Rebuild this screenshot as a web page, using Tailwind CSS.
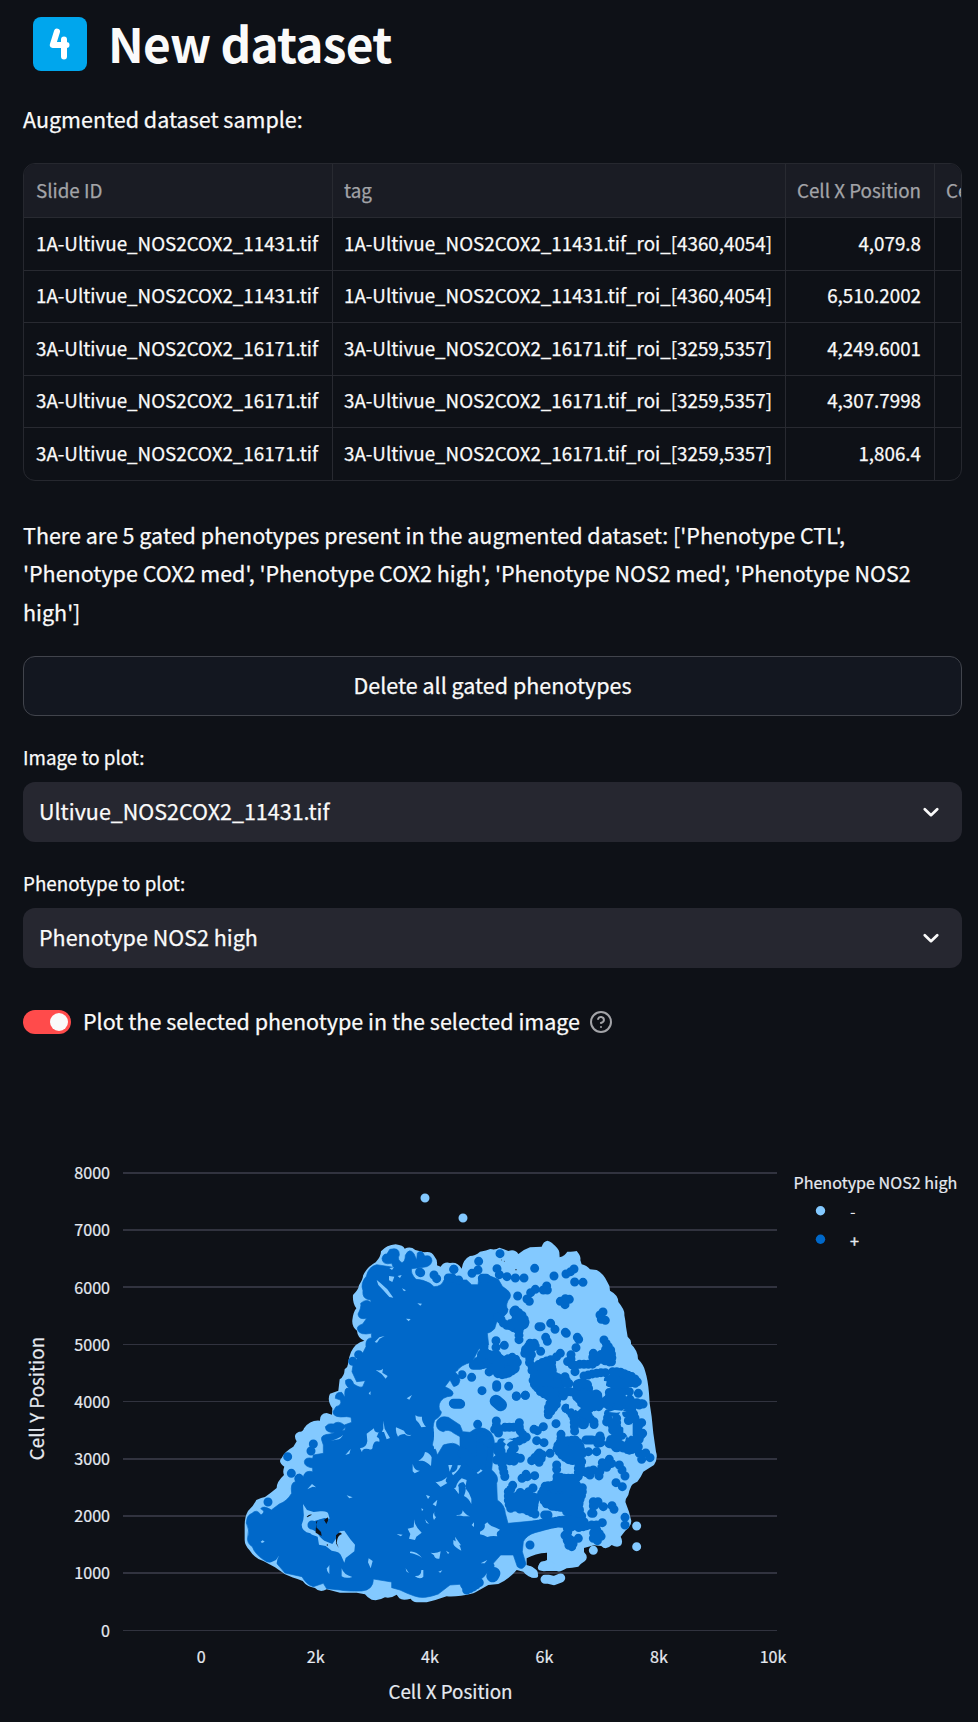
<!DOCTYPE html>
<html lang="en">
<head>
<meta charset="utf-8">
<title>New dataset</title>
<script src="https://cdn.jsdelivr.net/npm/@tailwindcss/browser@4"></script>
</head>
<body class="bg-[#0e1117] text-[#fafafa] font-['Noto_Sans_CJK_SC',sans-serif] w-[978px] h-[1722px] overflow-hidden">
<main class="flex flex-col">
  <div class="flex flex-col pl-[23px] w-[962px] h-[1100px] [-webkit-text-stroke:0.25px]">
    <h1 class="flex items-center h-[88px] pl-[10px] gap-[21px] text-[47.8px] tracking-[-0.75px] font-bold leading-none [-webkit-text-stroke:0px]">
      <svg class="w-[54px] h-[54px]" viewBox="0 0 54 54" role="img" aria-label="4"><rect width="54" height="54" rx="8" fill="#00a6ed"/><path d="M24 14.5 19.8 28H33.500M31 22.500V39.500" fill="none" stroke="#fff" stroke-width="6" stroke-linecap="round" stroke-linejoin="round"/></svg>
      <span class="whitespace-nowrap pb-[3px]">New dataset</span>
    </h1>
    <p class="mt-[12px] h-[63px] text-[21.5px] leading-[38px]">Augmented dataset sample:</p>

    <div class="h-[318px] shrink-0 rounded-[12px] border border-[#26282f] overflow-hidden text-[18.8px]">
      <div class="grid w-[1100px] grid-cols-[309px_453px_149px_189px] grid-rows-[54px_53px_52px_53px_52px_53px] *:flex *:items-center *:pl-[11px] *:pr-[13px] *:pb-[2px] *:border-r *:border-b *:border-[#282a31] *:whitespace-nowrap">
        <div class="bg-[#1a1c24] text-[#a3a4a8]"><span class="ml-px pt-px">Slide ID</span></div><div class="bg-[#1a1c24] text-[#a3a4a8]"><span class="pt-px">tag</span></div><div class="bg-[#1a1c24] text-[#a3a4a8] justify-end"><span class="pt-px">Cell X Position</span></div><div class="bg-[#1a1c24] text-[#a3a4a8]"><span class="pt-px">Cell Y Position</span></div>
        <div><span class="ml-px">1A-Ultivue_NOS2COX2_11431.tif</span></div><div>1A-Ultivue_NOS2COX2_11431.tif_roi_[4360,4054]</div><div class="justify-end">4,079.8</div><div></div>
        <div><span class="ml-px">1A-Ultivue_NOS2COX2_11431.tif</span></div><div>1A-Ultivue_NOS2COX2_11431.tif_roi_[4360,4054]</div><div class="justify-end">6,510.2002</div><div></div>
        <div><span class="ml-px">3A-Ultivue_NOS2COX2_16171.tif</span></div><div>3A-Ultivue_NOS2COX2_16171.tif_roi_[3259,5357]</div><div class="justify-end">4,249.6001</div><div></div>
        <div><span class="ml-px">3A-Ultivue_NOS2COX2_16171.tif</span></div><div>3A-Ultivue_NOS2COX2_16171.tif_roi_[3259,5357]</div><div class="justify-end">4,307.7998</div><div></div>
        <div><span class="ml-px">3A-Ultivue_NOS2COX2_16171.tif</span></div><div>3A-Ultivue_NOS2COX2_16171.tif_roi_[3259,5357]</div><div class="justify-end">1,806.4</div><div></div>
      </div>
    </div>

    <p class="mt-[35px] h-[140px] shrink-0 text-[21.5px] leading-[38.4px] whitespace-nowrap">There are 5 gated phenotypes present in the augmented dataset: ['Phenotype CTL',<br>'Phenotype COX2 med', 'Phenotype COX2 high', 'Phenotype NOS2 med', 'Phenotype NOS2<br>high']</p>

    <button class="h-[60px] shrink-0 rounded-[12px] border border-[#41444c] bg-[#131720] pb-[2px] text-[21.5px] leading-none">Delete all gated phenotypes</button>

    <label class="mt-[25px] h-[41px] shrink-0 text-[18.8px] leading-[32px]">Image to plot:</label>
    <div class="h-[60px] shrink-0 rounded-[12px] bg-[#262730] pl-[16px] pr-[23px] flex items-center justify-between text-[21.5px]">
      <span class="pb-[2px]">Ultivue_NOS2COX2_11431.tif</span>
      <svg class="w-4 h-4" viewBox="0 0 16 16"><path d="M1.800 5.300 8 11.200 14.200 5.300" fill="none" stroke="#fafafa" stroke-width="2.700" stroke-linecap="round" stroke-linejoin="round"/></svg>
    </div>
    <label class="mt-[25px] h-[41px] shrink-0 text-[18.8px] leading-[32px]">Phenotype to plot:</label>
    <div class="h-[60px] shrink-0 rounded-[12px] bg-[#262730] pl-[16px] pr-[23px] flex items-center justify-between text-[21.5px]">
      <span class="pb-[2px]">Phenotype NOS2 high</span>
      <svg class="w-4 h-4" viewBox="0 0 16 16"><path d="M1.800 5.300 8 11.200 14.200 5.300" fill="none" stroke="#fafafa" stroke-width="2.700" stroke-linecap="round" stroke-linejoin="round"/></svg>
    </div>
    <div class="mt-[36px] h-[36px] flex items-center">
      <div class="w-[48px] h-[24px] rounded-full bg-[#ff4b4b] flex items-center justify-end pr-[3px]"><div class="w-[18px] h-[18px] rounded-full bg-[#fafafa]"></div></div>
      <span class="ml-[12px] pb-[2px] text-[21.5px] leading-none whitespace-nowrap">Plot the selected phenotype in the selected image</span>
      <svg class="w-6 h-6 ml-[9px]" viewBox="0 0 24 24" fill="none" stroke="#a3a4a8" stroke-width="2" stroke-linecap="round" stroke-linejoin="round"><circle cx="12" cy="12" r="10"/><path d="M9.090 9a3 3 0 0 1 5.830 1c0 2-3 3-3 3"/><path d="M12 17h.01"/></svg>
    </div>
  </div>

  <svg class="w-[978px] h-[622px] shrink-0" viewBox="0 1100 978 622" font-size="16.100" fill="#e6eaf1">
    <!-- grid lines -->
    <g fill="none" stroke="#31333f">
      <path stroke-width="2" d="M123 1173H777M123 1230H777M123 1287H777M123 1459H777M123 1516H777M123 1573H777"/>
      <path d="M123 1344.500H777M123 1401.500H777M123 1630.500H777"/>
    </g>
    <g text-anchor="end" stroke="#e6eaf1" stroke-width=".2">
      <text x="110" y="1179">8000</text><text x="110" y="1236">7000</text><text x="110" y="1294">6000</text><text x="110" y="1351">5000</text><text x="110" y="1408">4000</text><text x="110" y="1465">3000</text><text x="110" y="1522">2000</text><text x="110" y="1579">1000</text><text x="110" y="1637">0</text>
    </g>
    <g text-anchor="middle" stroke="#e6eaf1" stroke-width=".2">
      <text x="201.300" y="1663">0</text><text x="315.700" y="1663">2k</text><text x="430" y="1663">4k</text><text x="544.500" y="1663">6k</text><text x="659" y="1663">8k</text><text x="773" y="1663">10k</text>
      <text x="450.500" y="1699" font-size="18.800">Cell X Position</text>
      <text transform="translate(44 1398.500) rotate(-90)" font-size="18.800">Cell Y Position</text>
    </g>
    <text x="793.500" y="1189.300" stroke="#e6eaf1" stroke-width=".2">Phenotype NOS2 high</text>
    <circle cx="820.500" cy="1210.700" r="4.700" fill="#83c9ff"/><circle cx="820.500" cy="1239.300" r="4.700" fill="#0068c9"/>
    <text x="850" y="1218">-</text><text x="850" y="1247" stroke="#e6eaf1" stroke-width=".4">+</text>

    <!-- scatter, three units per pixel -->
    <g transform="translate(230 1180) scale(.33333)" stroke-linecap="round" stroke-linejoin="round">
      <g id="negative">
        <path fill="#83c9ff" d="M497 193Q520 196 524 206Q542 198 556 210L582 217Q605 212 613 229Q623 240 621 256L632 260Q642 244 660 249Q682 244 695 266Q699 238 720 228Q735 228 750 215Q770 212 781 207Q797 211 808 203Q822 207 835 213Q855 206 865 222Q880 209 900 202L935 200Q940 184 952 182Q967 187 970 193Q986 206 988 217L989 232Q1005 227 1012 215Q1034 215 1040 213Q1054 229 1051 240L1055 253Q1070 256 1080 268L1100 270Q1120 280 1132 306Q1140 316 1140 332Q1165 345 1165 366Q1185 390 1183 405Q1187 425 1188 440L1193 470Q1205 480 1203 492Q1224 512 1224 537Q1242 555 1246 575Q1254 600 1257 640L1259 670L1265 710L1270 760L1278 815Q1285 835 1272 855L1240 875Q1232 893 1222 905Q1208 910 1204 918Q1196 935 1195 945Q1184 960 1187 968L1197 995L1204 1023Q1203 1040 1186 1052L1172 1070Q1180 1084 1173 1096Q1162 1105 1145 1095Q1127 1113 1114 1098L1092 1096L1062 1104V1116Q1077 1131 1065 1143Q1053 1150 1045 1160Q1025 1163 1010 1165Q990 1178 980 1173L950 1173Q920 1176 924 1160Q925 1150 951 1140V1118Q915 1120 890 1135V1155Q910 1160 920 1175Q929 1190 920 1193Q895 1195 880 1175L860 1170Q840 1195 805 1212L775 1215Q740 1235 730 1240Q680 1252 650 1249Q620 1260 590 1267H560Q548 1266 542 1256Q518 1263 508 1255L500 1244Q482 1256 465 1252Q445 1264 425 1259Q410 1251 405 1243L380 1238H330L290 1228Q270 1240 255 1224Q230 1220 218 1203Q185 1192 165 1183L135 1162L100 1143Q75 1137 58 1110Q44 1095 44 1080V1035Q44 1010 54 993Q69 980 79 960Q95 952 105 951Q125 937 140 924Q140 905 162 885Q157 874 163 860Q142 845 155 834Q163 815 190 800L200 784Q187 763 207 755Q219 757 222 745Q240 719 270 722Q269 700 290 699L306 704L307 685Q290 660 300 641L325 632L329 598Q343 590 344 568Q355 560 354 550Q357 530 363 516Q376 488 403 482Q382 473 381 452Q365 440 367 420Q370 395 379 385Q367 370 369 345Q385 330 387 316Q400 295 399 287Q410 262 437 247Q453 230 453 214Q470 195 497 193Z"/>
        <path stroke="#83c9ff" stroke-width="27" fill="none" d="M585 54h0M699 114h0M1220 1038h0M1220 1100h0M1090 1111h0M945 1198h12l15 4 20-8M910 1180l-10-8M940 1157h20"/>
      </g>

      <!-- dense body of positive cells -->
      <g id="positive" fill="#0068c9" stroke="#0068c9">
      <path stroke-width="2" d="M480 208Q509 200 508 225Q500 240 516 248Q526 245 526 226Q538 202 552 221L560 240L562 219Q576 207 584 228Q605 223 606 243Q602 260 580 262L545 266Q541 280 558 298Q578 298 600 310L612 320Q635 320 642 300Q657 280 674 283L690 300L710 300L725 314H744L747 288L775 286L805 298L817 319L832 330Q850 345 834 362Q826 380 834 388Q835 400 820 410Q806 416 800 426L794 446Q785 456 772 460L776 495Q745 500 740 520L726 546Q690 555 680 575L690 600Q686 620 672 622L660 600L645 620Q680 635 665 648Q635 650 628 672Q625 690 634 695Q635 708 614 720Q605 745 614 760L607 795Q620 810 622 825L640 795Q670 782 690 800V770L672 760Q655 745 640 755Q615 750 620 725Q630 705 655 712L690 735L698 755L720 757Q750 730 780 755Q800 775 790 820L785 870Q810 890 800 910L802 960Q825 975 826 1000L834 1030L970 1017L998 1008V1032Q965 1046 915 1058Q890 1065 880 1085L877 1115L888 1152Q878 1174 862 1160L850 1125H812L790 1150Q800 1165 770 1180Q760 1195 750 1198Q740 1220 710 1233Q695 1230 690 1213L660 1215L625 1242Q580 1259 553 1248Q530 1240 510 1230L485 1223V1206L430 1197Q430 1230 395 1233Q350 1234 330 1230L290 1226L280 1210L250 1220Q230 1215 216 1190L165 1179L140 1150L110 1145Q75 1125 67 1100Q50 1090 53 1072Q60 1050 49 1029Q50 1005 66 1000Q80 985 93 1005Q110 995 92 986Q100 975 124 990L148 972Q170 965 185 940Q180 908 196 905Q190 885 210 882L220 890Q225 870 248 875V864Q222 860 223 845Q225 830 248 835L250 825L280 820V795L275 780Q270 764 300 762L345 750L346 742L330 758Q285 762 286 740Q295 728 310 732Q325 720 343 735L365 727L363 712L350 710Q308 715 309 695L318 680Q337 675 331 660L316 655Q315 636 335 637L345 652Q341 620 357 625Q343 612 347 601Q365 590 371 612Q390 625 398 620L406 602L380 605Q373 590 366 575L370 550L400 516L408 500Q405 475 425 473L424 460Q390 467 383 450Q378 438 398 432L410 415Q385 420 384 402Q395 382 392 370Q410 354 423 367L422 360Q395 357 399 332Q390 310 409 289Q415 260 440 254L490 262L485 250Q457 256 456 235Q460 220 470 222Z"/>
      </g>

      <!-- clusters on the right half -->
      <g fill="none" stroke="#0068c9">
        <path stroke-width="34" stroke-dasharray="0 11" d="M758 525l20 25 20 20 30 10 30-20M760 550l30-20 40 20 20-10M855 395l15 22 10 14-20 14-20-14M925 565l20-15 20 20-30 15 0 15 20 20 30-5 15-10-30-15M890 510l20-15M960 325M1045 615l20 15-15 25 20 25-15 15M1100 650l-20 20M1130 510l10 20M1170 590l30 5M1180 620l-30 20M1000 785l30 10-10 20-5 20 20 5M1060 720l0 20M1160 800l20-5M1150 735l10 15M850 960l20 15 30-10M945 945l30-15 40-5 30 15-40 20-40 15 40 5 40-10M880 1045l60-12 50-8M1015 1080l10 15M1100 1070h5M755 770l0 60-10 60M700 820l40 40M1045 990l-20-10M1095 990h0"/>
        <path stroke-width="38" d="M798 663l14 12M792 1180l-4 8"/>
      </g>

      <!-- upper right scatter -->
      <g transform="translate(660 0)" stroke="#0068c9" fill="none" stroke-width="27">
        <path d="M150 221h0M86 244h0M84 270h0M66 280h0M11 268h0M141 266h0M148 284h0M171 290h0M196 294h0M222 294h0M254 265h0M312 288h0M372 267h0M362 275h0M348 282h0M374 306h0M399 307h0M203 348h0M256 328h0M242 338h0M231 357h0M238 364h0M290 318h0M292 330h0M280 330h0M331 364h0M346 356h0M358 358h0M345 374h0M459 396h0M450 405h0M466 421h0M454 418h0M267 440h6M302 430h0M315 448h0M346 457l3 3M287 472h0M292 484h0M382 472h0M386 478h0M378 503h0M331 520h0M320 530h0M138 482h0M138 502h0M163 496h0M272 514h0M97 295h12"/>
        <path stroke-dasharray="0 13" d="M196 390l20 16 12 20-20 6-10-15-10 22-24-4-12-18-14-8M207 440v42M240 490l18 0-4 14-20-6-10 22 22 0-10 24 10 14 0 14M102 500v20l-12 20-24 14M105 515l14 10 24 0 10 18-35-8M150 545l40-14 14 14-10 10 12 8M145 550l-12 18-20 10M150 560l-10 20 20 5 8-14 20 0M104 595h0M190 540l0 20 10 10M255 560l20-12 30-10 0 30-30 0 10 20-24 14-4 20-8-20 6-20 20 10 22 0 0 14-40 10 15 20 30 16 0-20-30-10M285 615l26 5 14-16 5 16-22 12M363 524l0 14-16 10M357 545l14 14 14-6 18 0 24 0 12-8M375 575l0 8M402 588l24-6 24-4 20 0"/>
        <path stroke-dasharray="0 12" d="M462 480l10 15 10 15 4 20-2 20-14-10 0-20-12 0-14 10 10 8 16 6M430 520l-2 14M345 590l5 14 8 8-18-6M488 575l20 0 20 8 20 8 14 12 0 8-24-4-20 8-18-14-20-4-4 10 24 10M475 600l10-5M500 615l-8 20-14 2 2 16 30-10 0-12M538 628h0M565 638h0M390 610l22 2 4 14-16 14-14 14 24-4 24-8 14 0M385 615l-5 20 0 20M350 636h8M343 660h0M470 660h40l10 0 0-6M540 658l4 10 20 8 16-4M430 660h-10l-10 10-20-4M400 670h70M480 676h60"/>
        <path d="M140 614v8M176 619h0M199 649h0M226 646h0M96 632h0M65 592h0M36 584h0M70 556h20M15 672h15M315 665h0M305 678h8M348 685h0"/>
      </g>
      <path stroke="#0068c9" fill="none" stroke-width="27" d="M569 276l3 2M612 285h0M620 296h0M655 294h10M672 268h0M686 300h0M386 524h0M368 544h0M173 830h0M184 880h0M250 792h0M243 813h0M114 966h0M207 895h0M672 672h20"/>

      <!-- lower right scatter -->
      <g transform="translate(660 630)" stroke="#0068c9" fill="none" stroke-width="27">
        <path d="M83 103h0M10 40h18M199 18h0M226 16h0M318 101h0M280 110h0M262 122h0M252 118h0M260 152h0M282 158h0M300 190h0M268 189h0M415 185h0M440 185h0M408 150h18M216 265h0M228 253h0M254 257h0M232 260h0M320 225h0M320 238h0M249 294h0M255 372h0M284 375h10M240 465h0M498 278h0M517 290h0M525 258h0M516 240h0M508 225h0M425 370h4M430 348h0M460 350h0M486 347h0M492 358h0M525 382h0M525 405h0M457 398h0M600 203h0M578 130h0M565 10h0M538 5h0"/>
        <path stroke-dasharray="0 13" d="M139 93l0 30 10 10M134 118h14M165 112l14 0 22 0M208 98l0 20 8 14 14 10-20 10-20 6-20 2M155 158l-5 14 6 20 0 28 4 20 5 22M142 170l2 20 14 10 20 0 24 2 20 6M140 210l16 0 40 4M165 200l24 0-8-20 14 0-8-20M188 286l-10 20 0 24M175 305l0 30 6 20 20-6 0-30 12-14 14 20 10 20 18 0-10 22-20-10-20 0M215 320l0 30 20 14 16 6M236 305l4 16 20 0-10 22M245 212l18-18 14 0-6 20-14 10M316 20l-10 12-10 14-2 30 14-20 12-14 0-20M275 3h30M322 5h-12"/>
        <path stroke-dasharray="0 12" d="M333 133l0 20-14 20 10 14 12 14 20 6 24 0 12-16-6-20-10-20-26 0-14 10 0 30 24 0 0-20 14 20M385 215l4 24 20 10 14-6M395 215l-6 20M385 235l0 30-20 0-20 0-24-6 0 20-20 10-14-4-10 24 16 20 20-4 24 0 20-16-10-18-30 0M275 310l10 30 20 6 24 0 20 10 24 0 14-20 10-26 0-20M285 325l14-14M300 340l20-15M330 335l24 8 26-18 0-40M345 280l-10 20M370 285l10 10M350 365l20 10 20 0 14 8M370 360l20-12"/>
        <path stroke-dasharray="0 13" d="M340 5l0 24M348 55l14 10 10 20 2 40M380 95l-14-20M384 70l18-6 0 20M348 5l20 0 20 14 14 14-10 20M400 10l25 10 0 28-16 20 16 24 12 6-12 14M415 40l0 24M430 15h20M440 35h20M420 50l30 0M490 10h25l0 18 25 10 25 0 14 6M478 20l0 20-10 15M500 30l10 20-14 14-20 4-6 28 20 4 14 20 20 10-20 14-20 0-8 20 24-4 20 14 20 8M488 120l10 10M545 42l0 30-10 20M545 60l10 20 0 40 20 10-10 24-14 10M575 98l-14 14 0 30-14 20-2 22-20-10M540 150l-10 24M530 70l0-10M500 85l0 30M450 138l-10 14 4 10M452 145l0 14M575 208l0-12 14-8M568 190h-6M565 170l4 10"/>
        <path stroke-dasharray="0 14" d="M335 400l24-10 24 6 20 0 8 12M345 390l14 24-10 22-10 0M352 415l28-10M400 410l-20 4M352 440l14 14 6 14-14 4-4-20M385 445l8-5M425 405l16 0-10 22 0 20 20-8 14 0M440 420l10 14-8 12M430 445l14 8M457 218l0 10-10 22 0 18M470 232l-4 12M478 208l8 14M430 240l-20 4M410 245l14 14M430 335l16 0M435 345l0 10"/>
        <path stroke-dasharray="0 11" d="M100 150l20 10M50 600l18-8 20-14"/>
      </g>

      <!-- gaps showing the negative cells below -->
      <g fill="#83c9ff">
        <path d="M440 300l12 10 20 18 18 25-12-2-18-20-15-16zM478 264l14-2-6 8zM477 288l16 2-6 16-10-5zM503 288l12-3-5 9zM516 325l12 6-6 3zM562 370l14 1-5 6zM528 416l14 1-6 7zM434 486l14-14 16-4-15 8-8 12zM437 570q16 4 22-4l-2 12 16 10-6 8-12-14zM416 640l6-6-1 12zM530 655l16-10-8 14zM655 612q8 10 20 8l12-6v16l-20-3zM677 575l8-2v12l-8-8z"/>
        <g transform="translate(0 630)">
          <path d="M390 175q20-2 22-22l-2-22 22-16q0 14 14 12l-6 14q10 2 8 14-16-6-20 14 0 14-12 8-20-4-20 10zM460 92l4 24 16 28-10 4-8-22-6 0 4-10zM498 112l24 10q6 16 22 12-8 8-20-2-14 0-20 8-8-14-6-28zM556 76q10 6 20 4-2 16 12 30l-14 2q-6-14-16-22zM585 186q14 2 20 16l-2 26q-14-14-26-16l-12 0q16-6 20-26zM548 222q6 22 22 20l-16 8-6-6zM302 152q24-6 38-18-10 14-14 14zM346 195l16-18-4 14zM232 298l14-16 12 10-10-2zM350 316l18 6-10 3zM138 510l10-14q-10 14-8 32l-16-4-4-6zM92 455l6-4 6 4-8 4zM219 342l12 18 20 6 20-2q22-2 24 8l4 14-16-2-40 12-10 14 30 18q2 10 20 24l24 10 14-20 8-18 14-2 18 26 14 16-2 20-26 20-4 14-8-18q-4-16-30-18l-18-14-20-4-4-24q-18-4-22-10-26-6-26-26 8-18 6-34z"/>
          <path d="M553 388q0 20 22 40l-16 12-4 10-18-4 4-14-8-16 18-4zM540 485q18-2 36 18-20-12-36-14zM602 488q16 4 30-4l-4 22q-14 2-16-10zM580 540l0 20q-10 10-26-2 20 2 20-18zM416 505l12 8-6 22-8-18zM290 535q4-2 8-10v28q-8-8-8-18zM335 535q6 20 32 26-20 6-32-2zM527 535l10 15-8-6zM625 545l12-4-6 7zM648 482l10 6-4 4zM500 432l18 2-6 5zM608 343l14-14-4 20zM616 362q-8 10 2 20l-6 8q-8-14 4-28zM588 315l12 4-6 8zM574 355l6 3-4 6zM585 388l12 14-8-4zM616 275q14 4 36-14-10 14 0 18l-20 12zM665 248q18-2 18-22l10 0q-6 16-24 30zM672 295l14-6v24q-6-14-14-18zM675 440l18 26-14 0zM612 120q16 6 24 8 14 4 32 22l-2 8-28 4-26 16z"/>
        </g>
        <g transform="translate(660 630)"><path d="M17 300q0-20 18-35l15 5-4 24q14 16 18 32l0 16q-8-18-22-24 12-30-2-42-14 2-16 12 0 14 4 22zM-5 225l12 0-8 20zM80 248q10-4 12-10l6 4-14 10zM90 425q18-8 14-22l8-6q10 14 26 16l12 6q-14 8-8 20-18-2-30 2-10-6-22-8zM65 405l7-8v14zM20 375q18 2 18-14 8 14 22 18l-20 0q-10-4-20-2zM10 450q18 6 24 32-20-10-24-20zM92 520l20-10-8 10zM160 152q12-8 30 0-14 2-20 12-6-6-10-8zM357 30q4 14 18 12l18 12-10 10q-14-12-26-8zM520 108q20 4 28-10l0 32-14 14q-6-16-14-16zM476 66l18-6 36 4-30 4zM430 -28q14-10 26 0l14 2-4 20-14-4q-8-12-22-18z"/></g>
      </g>

      <!-- empty background openings -->
      <g fill="#0e1117" transform="translate(0 630)"><path d="M230 380q8-8 16-6-8 4-14 8zM282 390l12-8 0 10-5 10zM258 395l6-3-5 20 14 14 2 12-18-10zM318 436q8-10 14-8l4 4q-14 4-16 26l6 16-8-14z"/></g>
      <path d="M858 269h0M292 1095h0" stroke="#0e1117" stroke-width="4" fill="none"/>
      <path d="M815 240h0M823 244h0" stroke="#0e1117" stroke-width="2" fill="none"/>
      <path fill="none" stroke="#0068c9" stroke-width="27" d="M246 1035h0M273 1032h0"/>
    </g>
  </svg>
</main>
</body>
</html>
